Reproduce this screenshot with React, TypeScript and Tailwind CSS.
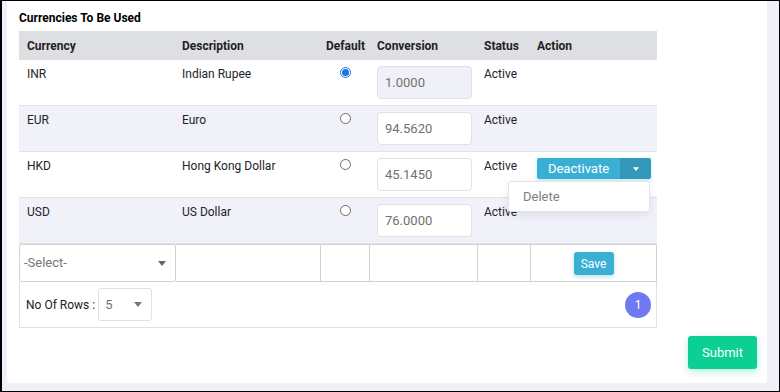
import React from "react";

type Row = {
  code: string;
  desc: string;
  rate: string;
  checked?: boolean;
  disabled?: boolean;
  shade?: boolean;
  action?: boolean;
};

const rows: Row[] = [
  { code: "INR", desc: "Indian Rupee", rate: "1.0000", checked: true, disabled: true },
  { code: "EUR", desc: "Euro", rate: "94.5620", shade: true },
  { code: "HKD", desc: "Hong Kong Dollar", rate: "45.1450", action: true },
  { code: "USD", desc: "US Dollar", rate: "76.0000", shade: true },
];

const Caret = ({ className, w = 8, h = 5 }: { className?: string; w?: number; h?: number }) => (
  <svg width={w} height={h} viewBox="0 0 8 5" className={className}>
    <path d="M0 0 L8 0 L4 5 Z" fill="currentColor" />
  </svg>
);

const Radio = ({ checked }: { checked?: boolean }) =>
  checked ? (
    <div className="w-[11px] h-[11px] rounded-full border border-[#1a73e8] flex items-center justify-center bg-white">
      <div className="w-[7px] h-[7px] rounded-full bg-[#1a73e8]"></div>
    </div>
  ) : (
    <div className="w-[11px] h-[11px] rounded-full border border-[#6b6b6b] bg-white"></div>
  );

export default function App() {
  return (
    <div
      className="w-[780px] h-[392px] border-l-2 border-r border-t border-b border-black bg-[#f0f1f8] pl-[5px] pr-[12px] pb-[8px] text-[#212529]"
      style={{ fontFamily: "Roboto, 'Liberation Sans', sans-serif" }}
    >
      <div className="bg-white h-full rounded-b-[3px] pl-[12px] pr-[10px] pt-[10px] flex flex-col">
        <h3 className="text-[12px] font-bold leading-[15px] text-black">Currencies To Be Used</h3>

        <div className="mt-[5px] w-[638px] text-[12px]">
          {/* header */}
          <div className="grid grid-cols-[157px_145px_49px_108px_53px_126px] h-[29px] bg-[#dedfe3] items-center font-bold text-[#222]">
            <div className="pl-[8px]">Currency</div>
            <div className="pl-[6px]">Description</div>
            <div className="text-center">Default</div>
            <div className="pl-[7px]">Conversion</div>
            <div className="pl-[6px]">Status</div>
            <div className="pl-[6px]">Action</div>
          </div>

          {rows.map((r) => (
            <div
              key={r.code}
              className={`grid grid-cols-[157px_145px_49px_108px_53px_126px] h-[46px] border-b border-[#e2e3e8] ${
                r.shade ? "bg-[#f0f1f9]" : "bg-white"
              }`}
            >
              <div className="pl-[8px] pt-[7px] leading-[15px]">{r.code}</div>
              <div className="pl-[6px] pt-[7px] leading-[15px]">{r.desc}</div>
              <div className="flex justify-center pt-[7px]">
                <Radio checked={r.checked} />
              </div>
              <div className="pl-[7px] pt-[6px]">
                <div
                  className={`w-[95px] h-[33px] rounded-[4px] border border-[#dfe1e7] px-[7px] flex items-center text-[13px] text-[#707070] ${
                    r.disabled ? "bg-[#f0f1f8]" : "bg-white"
                  }`}
                >
                  {r.rate}
                </div>
              </div>
              <div className="pl-[6px] pt-[7px] leading-[15px]">Active</div>
              <div className="pl-[6px] pt-[6px] relative">
                {r.action && (
                  <div className="relative w-[114px]">
                    <div className="flex h-[21px] rounded-[2px] overflow-hidden shadow-[0_2px_4px_rgba(56,172,208,0.3)]">
                      <div className="w-[83px] bg-[#3aafd4] text-white text-[13px] flex items-center justify-center">
                        Deactivate
                      </div>
                      <div className="flex-1 bg-[#3498ba] text-white flex items-center justify-center">
                        <Caret w={6} h={4} />
                      </div>
                    </div>
                    <div className="absolute left-[-29px] top-[23px] w-[142px] h-[31px] bg-white border border-[#e3e4ea] rounded-[3px] shadow-[0_3px_8px_rgba(0,0,0,0.08)] pl-[14px] flex items-center text-[13px] text-[#808080] z-10">
                      Delete
                    </div>
                  </div>
                )}
              </div>
            </div>
          ))}

          {/* entry row */}
          <div className="grid grid-cols-[157px_145px_49px_108px_53px_126px] h-[38px] bg-white">
            <div className="border border-[#d2d2d2] rounded-[2px] flex items-center justify-between pl-[4px] pr-[9px] text-[13px] text-[#777]">
              <span>-Select-</span>
              <Caret className="text-[#666]" />
            </div>
            <div className="border border-[#d2d2d2] border-l-0"></div>
            <div className="border border-[#d2d2d2] border-l-0"></div>
            <div className="border border-[#d2d2d2] border-l-0"></div>
            <div className="border border-[#d2d2d2] border-l-0"></div>
            <div className="border border-[#d2d2d2] border-l-0 flex justify-center pt-[7px]">
              <div className="w-[40px] h-[23px] rounded-[3px] bg-[#3aafd4] text-white text-[12px] flex items-center justify-center shadow-[0_2px_4px_rgba(56,172,208,0.35)]">
                Save
              </div>
            </div>
          </div>

          {/* footer */}
          <div className="h-[46px] border border-t-0 border-[#e0e1e5] flex items-center justify-between pl-[6px] pr-[5px]">
            <div className="flex items-center">
              <span className="text-[12px] text-[#222]">No Of Rows :</span>
              <div className="ml-[3px] w-[54px] h-[33px] border border-[#dfe1e7] rounded-[3px] flex items-center justify-between pl-[6px] pr-[9px] text-[13px] text-[#707070]">
                <span>5</span>
                <Caret className="text-[#777]" />
              </div>
            </div>
            <div className="w-[26px] h-[26px] rounded-full bg-[#7079f2] text-white text-[12px] flex items-center justify-center">
              1
            </div>
          </div>
        </div>

        <div className="flex justify-end mt-[8px]">
          <div className="w-[69px] h-[33px] rounded-[3px] bg-[#0ccf94] text-white text-[13px] flex items-center justify-center shadow-[0_3px_8px_rgba(12,207,148,0.3)]">
            Submit
          </div>
        </div>
      </div>
    </div>
  );
}
